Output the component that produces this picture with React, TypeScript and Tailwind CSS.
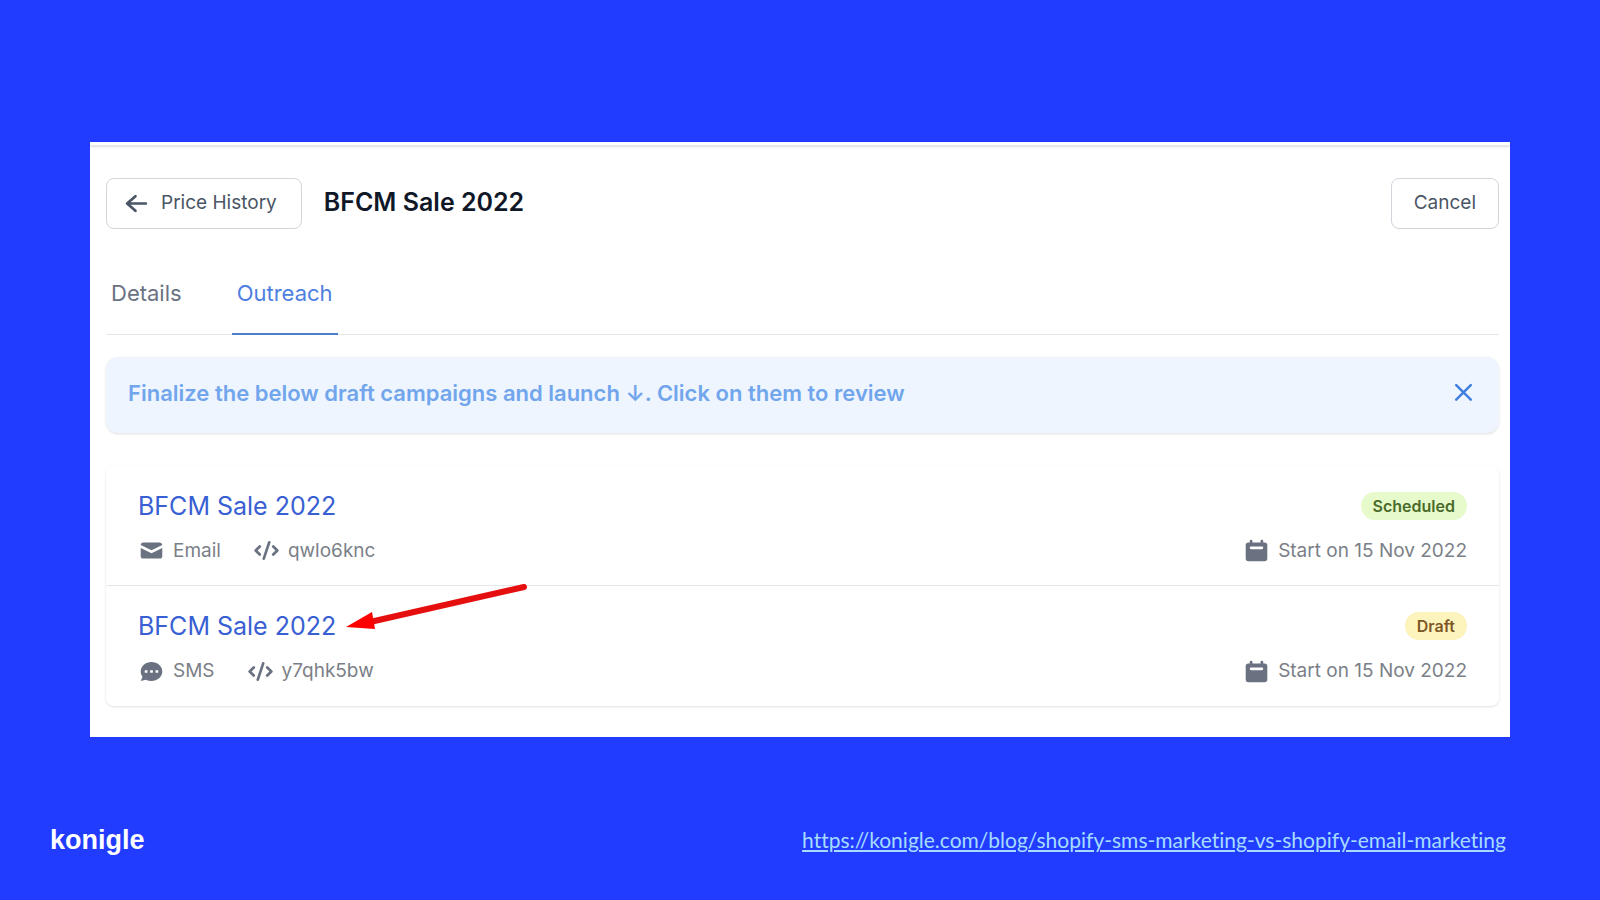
import type { ReactNode } from "react";
import clsx from "clsx";

type Campaign = {
  id: number;
  name: string;
  channel: "Email" | "SMS";
  code: string;
  status: "Scheduled" | "Draft";
  start: string;
};

const campaigns: Campaign[] = [
  {
    id: 1,
    name: "BFCM Sale 2022",
    channel: "Email",
    code: "qwlo6knc",
    status: "Scheduled",
    start: "Start on 15 Nov 2022",
  },
  {
    id: 2,
    name: "BFCM Sale 2022",
    channel: "SMS",
    code: "y7qhk5bw",
    status: "Draft",
    start: "Start on 15 Nov 2022",
  },
];

const blogUrl =
  "https://konigle.com/blog/shopify-sms-marketing-vs-shopify-email-marketing";

const SolidIcon = ({ children }: { children: ReactNode }) => (
  <svg
    viewBox="0 0 20 20"
    fill="currentColor"
    fillRule="evenodd"
    clipRule="evenodd"
    className="size-[27px] shrink-0 text-gray-500"
    aria-hidden="true"
  >
    {children}
  </svg>
);

const MailIcon = () => (
  <SolidIcon>
    <path d="M2.003 5.884L10 9.882l7.997-3.998A2 2 0 0016 4H4a2 2 0 00-1.997 1.884z" />
    <path d="M18 8.118l-8 4-8-4V14a2 2 0 002 2h12a2 2 0 002-2V8.118z" />
  </SolidIcon>
);

const ChatIcon = () => (
  <SolidIcon>
    <path d="M18 10c0 3.866-3.582 7-8 7a8.841 8.841 0 01-4.083-.98L2 17l1.338-3.123C2.493 12.767 2 11.434 2 10c0-3.866 3.582-7 8-7s8 3.134 8 7zM7 9H5v2h2V9zm8 0h-2v2h2V9zM9 9h2v2H9V9z" />
  </SolidIcon>
);

const CodeIcon = () => (
  <SolidIcon>
    <path d="M12.316 3.051a1 1 0 01.633 1.265l-4 12a1 1 0 11-1.898-.632l4-12a1 1 0 011.265-.633zM5.707 6.293a1 1 0 010 1.414L3.414 10l2.293 2.293a1 1 0 11-1.414 1.414l-3-3a1 1 0 010-1.414l3-3a1 1 0 011.414 0zm8.586 0a1 1 0 011.414 0l3 3a1 1 0 010 1.414l-3 3a1 1 0 11-1.414-1.414L16.586 10l-2.293-2.293a1 1 0 010-1.414z" />
  </SolidIcon>
);

const CalendarIcon = () => (
  <SolidIcon>
    <path d="M6 2a1 1 0 00-1 1v1H4a2 2 0 00-2 2v10a2 2 0 002 2h12a2 2 0 002-2V6a2 2 0 00-2-2h-1V3a1 1 0 10-2 0v1H7V3a1 1 0 00-1-1zm0 5a1 1 0 000 2h8a1 1 0 100-2H6z" />
  </SolidIcon>
);

const CampaignRow = ({ campaign }: { campaign: Campaign }) => (
  <li className="flex h-[120px] flex-col justify-center gap-[15px] px-8 pt-[3px]">
    <div className="flex items-center justify-between">
      <div className="relative">
        <a href="#" className="text-[25px] leading-8 text-[#3860d2]">
          {campaign.name}
        </a>
        {/* Pointer to the draft that still needs a review */}
        {campaign.status === "Draft" && (
          <svg
            viewBox="0 0 184 48"
            className="absolute bottom-3 left-full ml-[10px] h-12 w-[184px]"
            aria-hidden="true"
          >
            <path
              d="M178 5L24 40"
              stroke="#e60f0f"
              strokeWidth="6"
              strokeLinecap="round"
            />
            <path d="M0 45L26 30L29 47Z" fill="#fe0000" />
          </svg>
        )}
      </div>
      <span
        className={clsx(
          "rounded-full px-3 text-base leading-7 font-semibold",
          campaign.status === "Scheduled"
            ? "bg-[#e6facb] text-[#4b6b2a]"
            : "bg-[#fdf3bd] text-[#7d5726]"
        )}
      >
        {campaign.status}
      </span>
    </div>

    <div className="flex items-center justify-between text-[19px] leading-7 text-[#7b7f87]">
      <div className="flex items-center gap-8">
        <span className="flex items-center gap-2">
          {campaign.channel === "Email" ? <MailIcon /> : <ChatIcon />}
          {campaign.channel}
        </span>
        <span className="flex items-center gap-2">
          <CodeIcon />
          {campaign.code}
        </span>
      </div>
      <span className="flex items-center gap-2">
        <CalendarIcon />
        {campaign.start}
      </span>
    </div>
  </li>
);

const App = () => {
  return (
    <div className="flex min-h-screen flex-col bg-[#223cff] px-[90px] pt-[142px] font-['Inter',sans-serif]">
      <main className="bg-white pb-[31px]">
        <div className="h-1 border-b border-gray-200 shadow-sm" />

        <div className="pr-[11px] pl-4">
          {/* Header */}
          <header className="flex items-center pt-8">
            <button
              type="button"
              className="flex h-[51px] items-center gap-3 rounded-lg border border-gray-300 pr-6 pl-[17px] text-[19px] text-gray-600"
            >
              <svg
                viewBox="0 0 24 24"
                fill="none"
                stroke="currentColor"
                strokeWidth="2.6"
                strokeLinecap="round"
                strokeLinejoin="round"
                className="size-[25px]"
                aria-hidden="true"
              >
                <path d="M11 19l-8-7m0 0l8-7m-8 7h18" />
              </svg>
              Price History
            </button>
            <h1 className="ml-[22px] pb-0.5 text-[25px] font-semibold text-gray-900">
              BFCM Sale 2022
            </h1>
            <button
              type="button"
              className="ml-auto h-[51px] rounded-lg border border-gray-300 px-[22px] text-[19px] text-gray-600"
            >
              Cancel
            </button>
          </header>

          {/* Tabs */}
          <nav className="mt-[22px] flex gap-[45px] border-b border-gray-200 text-[22px] leading-[33px]">
            <a href="#" className="-mb-px px-[5px] pt-[26px] pb-[25px] text-gray-500">
              Details
            </a>
            <a
              href="#"
              className="-mb-px border-b-2 border-[#4a7fc9] px-[5px] pt-[26px] pb-[23px] text-[#4f7fe0]"
              aria-current="page"
            >
              Outreach
            </a>
          </nav>

          {/* Notice */}
          <div className="mt-[22px] flex h-[76px] items-center justify-between rounded-xl bg-[#eef5ff] px-[22px] pb-1 shadow-sm">
            <p className="text-[22px] font-semibold text-[#71a5ec]">
              Finalize the below draft campaigns and launch ↓. Click on them to
              review
            </p>
            <button type="button" aria-label="Dismiss" className="text-[#3f7fdf]">
              <svg
                viewBox="0 0 24 24"
                fill="none"
                stroke="currentColor"
                strokeWidth="2.2"
                strokeLinecap="round"
                className="size-[27px]"
                aria-hidden="true"
              >
                <path d="M5.5 4.5l13 13M18.5 4.5l-13 13" />
              </svg>
            </button>
          </div>

          {/* Campaigns */}
          <ul className="mt-[33px] divide-y divide-gray-200 rounded-lg shadow-sm">
            {campaigns.map((campaign) => (
              <CampaignRow key={campaign.id} campaign={campaign} />
            ))}
          </ul>
        </div>
      </main>

      <footer className="-mx-10 mt-auto flex items-center justify-between pb-10">
        <span className="font-['Liberation_Sans',sans-serif] text-[27px] font-bold text-white">
          konigle
        </span>
        <a
          href={blogUrl}
          className="mr-11 font-['Lato',sans-serif] text-[21px] text-[#a5dcff] underline [font-variant-ligatures:none]"
        >
          {blogUrl}
        </a>
      </footer>
    </div>
  );
};

export default App;
